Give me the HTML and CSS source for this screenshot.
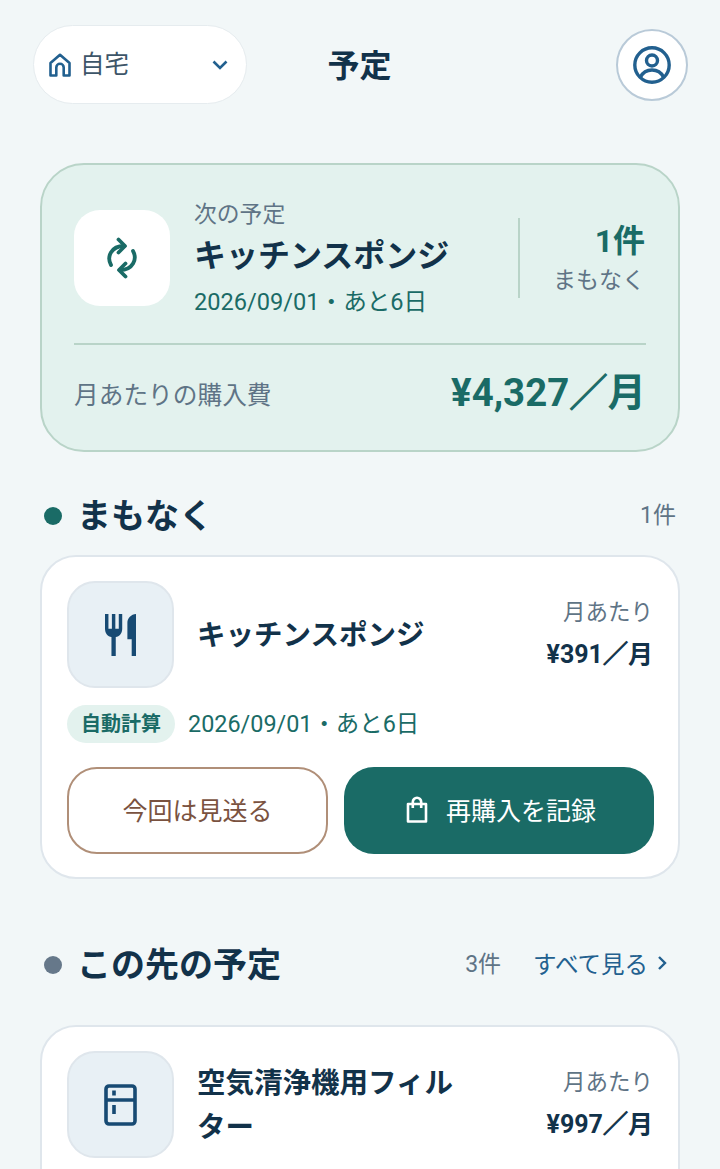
FILE: index.html
```html
<!DOCTYPE html>
<html lang="ja">
<head>
  <meta charset="UTF-8" />
  <meta name="viewport" content="width=device-width, initial-scale=1.0" />
  <title>予定</title>
  <link rel="stylesheet" href="styles.css">
</head>
<body>
  <div class="page">
    <header class="topbar">
      <div class="place">
        <svg class="place-icon" viewBox="0 0 22 24" fill="none" stroke="currentColor" stroke-width="2.6" stroke-linejoin="round">
          <path d="M1.5 10 11 1.8 20.5 10v12.5h-5.8v-8a3.7 3.7 0 0 0-7.400 0v8H1.500z"/>
        </svg>
        <span class="place-name">自宅</span>
        <svg class="place-arrow" viewBox="0 0 16 10" fill="none" stroke="currentColor" stroke-width="2.6">
          <path d="M1.500 1.500 8 8l6.500-6.500"/>
        </svg>
      </div>
      <h1 class="page-title">予定</h1>
      <div class="avatar">
        <svg viewBox="0 0 38 38" fill="none" stroke="currentColor" stroke-width="3.400">
          <circle cx="19" cy="19" r="17.200"/>
          <circle cx="19" cy="14.500" r="5.500"/>
          <path d="M7.500 31c2.500-5 6.500-7 11.500-7s9 2 11.500 7"/>
        </svg>
      </div>
    </header>

    <main class="content">
      <section class="hero">
        <div class="hero-top">
          <div class="hero-icon">
            <svg viewBox="0 0 32 42" fill="none" stroke="currentColor" stroke-width="3.800" stroke-linecap="round" stroke-linejoin="round">
              <path d="M5 28C.5 20 5 9 18 9"/>
              <path d="M12.500 2.500 19 9l-6.500 6.500"/>
              <path d="M27 14c4.500 8 0 19-13 19"/>
              <path d="M19.500 39.500 13 33l6.500-6.500"/>
            </svg>
          </div>
          <div class="hero-text">
            <div class="hero-label">次の予定</div>
            <div class="hero-name">キッチンスポンジ</div>
            <div class="hero-date">2026/09/01・あと6日</div>
          </div>
          <div class="hero-stat">
            <div class="hero-count">1件</div>
            <div class="hero-soon">まもなく</div>
          </div>
        </div>
        <div class="hero-bottom">
          <span class="hero-cost-label">月あたりの購入費</span>
          <span class="hero-cost">¥4,327<span class="slash">／</span>月</span>
        </div>
      </section>

      <div class="section-head">
        <span class="dot dot-teal"></span>
        <h2 class="section-title">まもなく</h2>
        <span class="section-count">1件</span>
      </div>
      <article class="card">
        <div class="card-row">
          <div class="item-icon">
            <svg class="icon-fork" viewBox="3 2 18 20" preserveAspectRatio="none" fill="currentColor">
              <path d="M11 9H9V2H7v7H5V2H3v7c0 2.120 1.660 3.840 3.750 3.970V22h2.500v-9.030C11.340 12.840 13 11.120 13 9V2h-2v7zm5-3v8h2.500v8H21V2c-2.760 0-5 2.240-5 4z"/>
            </svg>
          </div>
          <div class="item-name">キッチンスポンジ</div>
          <div class="item-price">
            <div class="price-label">月あたり</div>
            <div class="price-value">¥391<span class="slash">／</span>月</div>
          </div>
        </div>
        <div class="meta-row">
          <span class="chip">自動計算</span>
          <span class="meta-date">2026/09/01・あと6日</span>
        </div>
        <div class="actions">
          <button class="btn btn-skip">今回は見送る</button>
          <button class="btn btn-record">
            <svg viewBox="0 0 22 27" fill="none" stroke="currentColor" stroke-width="2.600" stroke-linejoin="round">
              <path d="M2 8h18v17.500H2z"/>
              <path d="M6.800 12V6a4.200 4.200 0 0 1 8.400 0v6"/>
            </svg>
            再購入を記録
          </button>
        </div>
      </article>

      <div class="section-head section-head-next">
        <span class="dot dot-gray"></span>
        <h2 class="section-title">この先の予定</h2>
        <span class="section-count">3件</span>
        <a class="see-all">すべて見る
          <svg viewBox="0 0 10 16" fill="none" stroke="currentColor" stroke-width="2.400">
            <path d="M2 2l6 6-6 6"/>
          </svg>
        </a>
      </div>
      <article class="card card-cut">
        <div class="card-row">
          <div class="item-icon">
            <svg class="icon-fridge" viewBox="0 0 33 42" fill="none" stroke="currentColor" stroke-width="3.600">
              <rect x="2" y="2" width="29" height="38" rx="3"/>
              <path d="M2 16h29M10 6.500v5M10 21v9"/>
            </svg>
          </div>
          <div class="item-name">空気清浄機用フィルター</div>
          <div class="item-price">
            <div class="price-label">月あたり</div>
            <div class="price-value">¥997<span class="slash">／</span>月</div>
          </div>
        </div>
      </article>
    </main>
  </div>
</body>
</html>
```

FILE: styles.css
```css
:root {
  --navy: #12324a;
  --teal: #1a6b66;
  --gray: #5f7486;
  --blue: #22608f;
  --line: #dfe6ec;
  --font: Roboto, 'Noto Sans CJK JP', sans-serif;
}

* {
  box-sizing: border-box;
  margin: 0;
  padding: 0;
}

body {
  font-family: var(--font);
  background: #f2f7f8;
  color: var(--navy);
}

.page {
  height: 1169px;
  overflow: hidden;
}

.topbar {
  display: grid;
  grid-template-columns: 1fr auto 1fr;
  align-items: center;
  padding: 25px 32px 0 33px;
}

.place {
  width: 214px;
  height: 79px;
  display: flex;
  align-items: center;
  padding: 0 18px 0 15px;
  background: white;
  border: 1px solid #e6ecef;
  border-radius: 40px;
}

.place-icon {
  width: 22px;
  height: 24px;
  color: var(--blue);
}

.place-name {
  margin: 0 0 4px 9px;
  font-size: 24.500px;
  color: #3d5568;
}

.place-arrow {
  width: 16px;
  height: 10px;
  margin-left: auto;
  color: var(--blue);
}

.page-title {
  margin: 0 2px 4px 0;
  font-size: 32px;
  font-weight: 700;
}

.avatar {
  justify-self: end;
  width: 72px;
  height: 72px;
  display: flex;
  align-items: center;
  justify-content: center;
  background: white;
  border: 2px solid #b9cad8;
  border-radius: 50%;
  color: var(--blue);
}

.avatar svg {
  width: 38px;
  height: 38px;
}

.content {
  padding: 0 40px;
}

/* the fullwidth slash comes out thin in the CJK bold */
.slash {
  -webkit-text-stroke: 1px currentColor;
}

.hero {
  margin-top: 59px;
  padding: 36px 32px 32px;
  background: #e3f2ee;
  border: 2px solid #b9d4c8;
  border-radius: 44px;
}

.hero-top {
  display: flex;
  align-items: center;
  padding-bottom: 28px;
  border-bottom: 2px solid #b9d4c8;
}

.hero-icon {
  width: 96px;
  height: 96px;
  flex: none;
  display: flex;
  align-items: center;
  justify-content: center;
  background: white;
  border-radius: 26px;
  color: var(--teal);
}

.hero-icon svg {
  width: 32px;
  height: 42px;
}

.hero-text {
  flex: 1;
  margin-left: 24px;
}

.hero-label {
  font-size: 22.800px;
  line-height: 28px;
  color: var(--gray);
}

.hero-name {
  margin-top: 4px;
  font-size: 32px;
  line-height: 46px;
  font-weight: 700;
}

.hero-date {
  margin-top: 11px;
  margin-bottom: 1px;
  font-size: 23.600px;
  line-height: 24px;
  color: var(--teal);
}

.hero-stat {
  width: 128px;
  height: 80px;
  flex: none;
  padding: 1px 1px 0 0;
  text-align: right;
  border-left: 2px solid #b9d4c8;
}

.hero-count {
  font-size: 32px;
  line-height: 44px;
  font-weight: 700;
  color: var(--teal);
}

.hero-soon {
  font-size: 23px;
  line-height: 36px;
  color: var(--gray);
}

.hero-bottom {
  display: flex;
  justify-content: space-between;
  align-items: center;
  padding-top: 23px;
}

.hero-cost-label {
  font-size: 24.700px;
  color: var(--gray);
}

.hero-cost {
  font-size: 38.400px;
  line-height: 50px;
  font-weight: 700;
  color: var(--teal);
}

.section-head {
  display: flex;
  align-items: center;
  height: 44px;
  padding-bottom: 4px;
  margin: 41px 4px 18px 4px;
}

.section-head-next {
  margin: 63px 13px 39px 4px;
}

.dot {
  width: 18px;
  height: 18px;
  margin-top: 5px;
  border-radius: 50%;
}

.dot-teal {
  background: var(--teal);
}

.dot-gray {
  background: #66788a;
}

.section-title {
  margin-left: 15px;
  font-size: 34px;
  font-weight: 700;
}

.section-count {
  margin-left: auto;
  font-size: 23px;
  color: var(--gray);
}

.see-all {
  display: flex;
  align-items: center;
  gap: 9px;
  margin: 2px 0 0 32px;
  font-size: 23.500px;
  color: var(--blue);
}

.see-all svg {
  width: 10px;
  height: 16px;
}

.card {
  padding: 24px 24px 23px 25px;
  background: white;
  border: 2px solid var(--line);
  border-radius: 36px;
}

.card-cut {
  min-height: 220px;
}

.card-row {
  display: flex;
  align-items: center;
}

.item-icon {
  width: 107px;
  height: 107px;
  flex: none;
  display: flex;
  align-items: center;
  justify-content: center;
  background: #e8f0f5;
  border: 2px solid var(--line);
  border-radius: 28px;
  color: #174a73;
}

.icon-fork {
  width: 31px;
  height: 42px;
}

.icon-fridge {
  width: 33px;
  height: 42px;
}

.item-name {
  width: 270px;
  margin: 3px 0 0 23px;
  font-size: 28.500px;
  line-height: 44px;
  font-weight: 700;
}

.item-price {
  margin: 0 0 2px auto;
  padding-right: 1px;
  text-align: right;
}

.price-label {
  font-size: 22.500px;
  line-height: 36px;
  color: var(--gray);
}

.price-value {
  margin-top: 7px;
  font-size: 25px;
  line-height: 36px;
  font-weight: 700;
}

.meta-row {
  display: flex;
  align-items: center;
  gap: 13px;
  margin-top: 17px;
}

.chip {
  width: 108px;
  height: 38px;
  line-height: 38px;
  text-align: center;
  font-size: 20px;
  font-weight: 700;
  color: var(--teal);
  background: #e3f2ee;
  border-radius: 19px;
}

.meta-date {
  margin-bottom: 4px;
  font-size: 23.400px;
  color: var(--teal);
}

.actions {
  display: flex;
  gap: 16px;
  margin-top: 24px;
}

.btn {
  height: 87px;
  display: flex;
  align-items: center;
  justify-content: center;
  padding-bottom: 3px;
  font-family: var(--font);
  font-size: 25px;
  border-radius: 30px;
}

.btn-skip {
  width: 261px;
  flex: none;
  color: #7a5240;
  background: white;
  border: 2px solid #b08f78;
}

.btn-record {
  flex: 1;
  gap: 18px;
  padding-left: 4px;
  color: white;
  background: var(--teal);
  border: none;
}

.btn-record svg {
  width: 22px;
  height: 27px;
}
```
